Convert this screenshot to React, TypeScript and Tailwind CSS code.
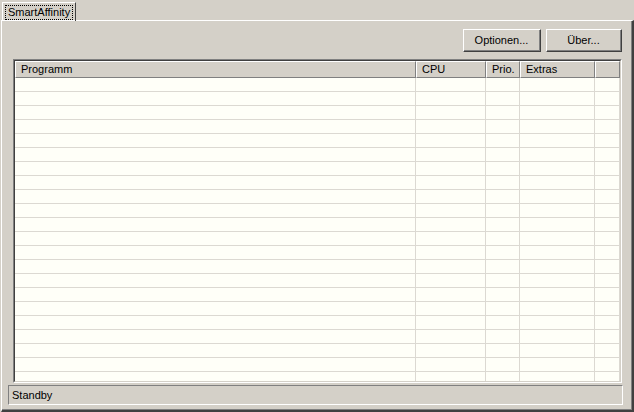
import React from 'react';

const columns = [
  { label: 'Programm', width: 'w-[401px]' },
  { label: 'CPU', width: 'w-[70px]' },
  { label: 'Prio.', width: 'w-[34px]' },
  { label: 'Extras', width: 'w-[75px]' },
  { label: '', width: 'flex-1' },
];

const rows = Array.from({ length: 23 }, (_, i) => i);

function Button({ label, width }: { label: string; width: string }) {
  return (
    <div className={`${width} h-[23px] border border-t-white border-l-white border-r-[#404040] border-b-[#404040]`}>
      <div className="h-full flex items-center justify-center border-r border-b border-[#808080] text-[11px] leading-none text-black">
        {label}
      </div>
    </div>
  );
}

export default function App() {
  return (
    <div
      className="w-[634px] h-[412px] bg-[#d4d0c8] flex flex-col overflow-hidden select-none"
      style={{ fontFamily: '"Liberation Sans", Arial, sans-serif' }}
    >
      {/* Tab strip */}
      <div className="h-[20px] pl-[2px] pt-[2px] flex">
        <div className="w-[74px] h-[19px] border-l border-t border-white border-r border-r-[#404040] relative">
          <div className="absolute left-[2px] top-[2px] right-[2px] bottom-[1px] border border-dotted border-black" />
          <div className="pl-[5px] pt-[3px] text-[11px] leading-[13px] text-black">SmartAffinity</div>
        </div>
      </div>

      {/* Tab panel */}
      <div className="flex-1 ml-[1px] border-t border-l border-white border-r-2 border-b-2 border-r-[#404040] border-b-[#404040] flex flex-col">
        <div className="flex-1 flex flex-col border-r border-b border-[#808080] pl-[11px] pr-[9px]">
          {/* Buttons */}
          <div className="mt-[8px] flex justify-end gap-[5px]">
            <Button label="Optionen..." width="w-[78px]" />
            <Button label="Über..." width="w-[76px]" />
          </div>

          {/* List view */}
          <div className="mt-[7px] h-[324px] border border-t-[#808080] border-l-[#808080] border-r-white border-b-white">
            <div className="h-full border border-t-[#404040] border-l-[#404040] border-r-[#d4d0c8] border-b-[#d4d0c8] bg-[#fffff8] flex flex-col overflow-hidden">
              <div className="h-[17px] flex shrink-0 bg-[#d4d0c8]">
                {columns.map((c, i) => (
                  <div
                    key={i}
                    className={`${c.width} h-full border-t border-l border-white border-r border-b border-r-[#808080] border-b-[#808080] pl-[5px] text-[11px] leading-[15px] text-black`}
                  >
                    {c.label}
                  </div>
                ))}
              </div>
              {rows.map((r) => (
                <div key={r} className="h-[14px] flex shrink-0 border-b border-[#dcd9d2]">
                  {columns.map((c, i) => (
                    <div key={i} className={`${c.width} h-full border-r border-[#dcd9d2]`} />
                  ))}
                </div>
              ))}
            </div>
          </div>

          {/* Status bar */}
          <div className="mt-[2px] -ml-[5px] -mr-[1px] h-[20px] border border-t-[#808080] border-l-[#808080] border-r-white border-b-white flex items-center pl-[3px] text-[11px] text-black">
            Standby
          </div>
        </div>
      </div>
    </div>
  );
}
